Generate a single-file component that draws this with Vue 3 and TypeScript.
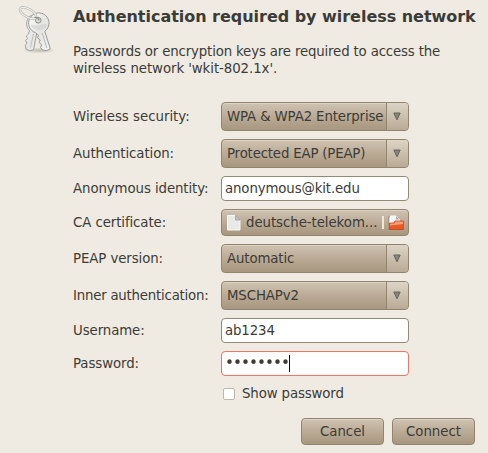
<script setup lang="ts">
import { ref } from 'vue'

interface Field {
  label: string
  kind: 'combo' | 'text' | 'file' | 'password'
  value: string
}

const fields: Field[] = [
  { label: 'Wireless security:', kind: 'combo', value: 'WPA & WPA2 Enterprise' },
  { label: 'Authentication:', kind: 'combo', value: 'Protected EAP (PEAP)' },
  { label: 'Anonymous identity:', kind: 'text', value: 'anonymous@kit.edu' },
  { label: 'CA certificate:', kind: 'file', value: 'deutsche-telekom...' },
  { label: 'PEAP version:', kind: 'combo', value: 'Automatic' },
  { label: 'Inner authentication:', kind: 'combo', value: 'MSCHAPv2' },
  { label: 'Username:', kind: 'text', value: 'ab1234' },
  { label: 'Password:', kind: 'password', value: '••••••••' },
]

const showPassword = ref(false)
</script>

<template>
  <main class="dialog">
    <svg class="keys" viewBox="0 0 40 52" width="40" height="52">
      <defs>
        <linearGradient id="metal" x1="0" y1="0" x2="1" y2="1">
          <stop offset="0" stop-color="#fbfbfa" />
          <stop offset="0.5" stop-color="#e4e4e2" />
          <stop offset="1" stop-color="#f4f4f3" />
        </linearGradient>
        <radialGradient id="ground">
          <stop offset="0" stop-color="#8f8a80" stop-opacity="0.5" />
          <stop offset="1" stop-color="#8f8a80" stop-opacity="0" />
        </radialGradient>
      </defs>
      <ellipse cx="22" cy="47.500" rx="17" ry="3" fill="url(#ground)" />
      <path d="M14 12.500C8.500 16 8.500 24 12.500 27.500L11.500 31 9.300 33 10.500 35.500 8.500 37.500 9.800 40 8.300 42.500 9 46 12.500 47.700 16.500 46.800 20 29 26 14Z" fill="url(#metal)" stroke="#989895" stroke-width=".9" />
      <path d="M16.500 31L13.500 44.500" stroke="#c0c0bd" fill="none" />
      <path d="M18.500 29.700A10.200 10.200 0 1 1 27.800 28.300L33.300 45.800 29.800 47.600 25.500 47 23.500 44.500 24.600 42 22.200 39.500 23.200 37 20.500 34.800 21.500 32.500Z" fill="url(#metal)" stroke="#8f8f8c" stroke-width=".9" />
      <path d="M13.500 21.500C15 28 27 29.500 30.500 22.500C27 18 23 25 13.500 21.500Z" fill="#cfcfcd" opacity=".6" />
      <path d="M25.200 30L29.900 45" stroke="#b8b8b5" fill="none" />
      <circle cx="21.300" cy="17.300" r="2.800" fill="#dedbd3" stroke="#8d8d8a" />
      <ellipse cx="11" cy="10" rx="9" ry="4" transform="rotate(30 11 10)" fill="none" stroke="#b0b0ac" stroke-width="2.400" />
      <ellipse cx="11" cy="10" rx="9" ry="4" transform="rotate(30 11 10)" fill="none" stroke="#efefec" stroke-width="1.300" />
      <path d="M17.500 14.500Q21.500 13.500 22 17.500" fill="none" stroke="#8d8d8a" stroke-width="1.200" />
    </svg>

    <section class="content">
      <h1>Authentication required by wireless network</h1>
      <p>
        <span class="lead">Passwords or encryption keys are required to access the</span><br />
        <span>wireless network 'wkit-802.1x'.</span>
      </p>

      <div class="form">
        <div v-for="field in fields" :key="field.label" class="row" :class="field.kind">
          <span class="label">{{ field.label }}</span>

          <div v-if="field.kind === 'combo'" class="control raised">
            <span class="value">{{ field.value }}</span>
            <span class="arrow">
              <svg width="8" height="9" viewBox="0 0 8 9">
                <path d="M.8 1H7.200L4 7.800Z" fill="#87857d" stroke="#66635a" />
              </svg>
            </span>
          </div>

          <div v-else-if="field.kind === 'file'" class="control raised">
            <svg class="doc" width="14" height="16" viewBox="0 0 14 16">
              <path d="M.5.500H8.500L13 5V15H.5Z" fill="#e9e9e8" stroke="#f7f7f5" />
              <path d="M8.500 .5V5H13Z" fill="#c7c5c0" stroke="#98948b" stroke-width=".7" />
            </svg>
            <span class="value">{{ field.value }}</span>
            <span class="divider"></span>
            <svg class="folder" width="16" height="16" viewBox="0 0 16 16">
              <path d="M.5 2V14H3V2Z" fill="#d9d3ca" stroke="#9d7766" stroke-width=".6" />
              <path d="M2.500 1H8L11.500 4.500V9H2.500Z" fill="#f3f3f1" stroke="#fff" />
              <path d="M8 1V4.500H11.500Z" fill="#aaa69e" />
              <path d="M1.500 8H6L7 6H15.300V14.500H1.500Z" fill="#e95a27" stroke="#c5421a" stroke-width=".8" />
              <path d="M2 8.500H6.500L7.500 6.500H15V9L2 10.500Z" fill="#f6a07a" />
            </svg>
          </div>

          <div v-else class="control entry">
            <span class="value">{{ field.value }}</span>
            <span v-if="field.kind === 'password'" class="caret"></span>
          </div>
        </div>
      </div>

      <label class="check">
        <input v-model="showPassword" type="checkbox" />
        <span>Show password</span>
      </label>
    </section>

    <footer>
      <button type="button" class="raised">Cancel</button>
      <button type="button" class="raised">Connect</button>
    </footer>
  </main>
</template>

<style>
body {
  background: #efebe2;
}
</style>

<style scoped>
.dialog {
  position: relative;
  box-sizing: border-box;
  width: 488px;
  height: 453px;
  padding: 7px 13px 8px 73px;
  background: #efebe2;
  color: #3c3b37;
  font: 13.333px/17px "DejaVu Sans", sans-serif;
  letter-spacing: -0.13px;
  white-space: nowrap;
  display: flex;
  flex-direction: column;
}
.keys {
  position: absolute;
  left: 17px;
  top: 3px;
}
h1 {
  margin: 0 0 17px;
  font-size: 16px;
  line-height: 19px;
  font-weight: bold;
  letter-spacing: -0.03px;
}
p {
  margin: 0 0 25px;
  letter-spacing: -0.07px;
}
.lead {
  letter-spacing: -0.16px;
}
.form {
  display: flex;
  flex-direction: column;
  gap: 8px;
}
.row {
  display: grid;
  grid-template-columns: 148px 188px;
  align-items: center;
  height: 25px;
}
.row.combo {
  height: 29px;
}
.row.file {
  height: 27px;
}
.label {
  letter-spacing: -0.09px;
}
.row:first-child .label {
  letter-spacing: 0;
}
.row:nth-child(6) .label {
  letter-spacing: -0.22px;
}
.control {
  box-sizing: border-box;
  width: 188px;
  height: 100%;
  display: flex;
  align-items: center;
  border-radius: 4px;
}
.raised {
  border: 1px solid #918570;
  border-radius: 4px;
  background: linear-gradient(#cfc3b2, #bbab96 50%, #a7977f);
  box-shadow: inset 0 1px #ddd3c4;
}
.combo .value {
  width: 164px;
  box-sizing: border-box;
  padding-left: 5px;
}
.row:nth-child(2) .value {
  letter-spacing: -0.18px;
}
.arrow {
  flex: 1;
  height: 100%;
  box-sizing: border-box;
  padding-right: 2px;
  display: flex;
  align-items: center;
  justify-content: center;
  border-left: 1px solid #918570;
  border-radius: 0 3px 3px 0;
  background: linear-gradient(#ddd4c6, #b9aa95);
}
.entry {
  border: 1px solid #918a75;
  background: #fff;
  padding-left: 3px;
}
.password .entry {
  border-color: #e37b6c;
  box-shadow: inset 0 0 1px #f3b1a6;
}
.password .value {
  font-size: 15px;
  letter-spacing: -0.85px;
}
.caret {
  width: 1px;
  height: 17px;
  background: #111;
}
.doc {
  margin: 0 5px 0 5px;
}
.file .value {
  width: 136px;
  letter-spacing: -0.06px;
}
.divider {
  width: 2px;
  height: 13px;
  background: #eee7dc;
}
.folder {
  margin-left: 4px;
}
.check {
  display: flex;
  align-items: center;
  height: 17px;
  margin: 9px 0 0 150px;
}
.check input {
  appearance: none;
  box-sizing: border-box;
  width: 12px;
  height: 12px;
  margin: 0 7px 0 0;
  border: 1px solid #bdb8aa;
  border-radius: 2px;
  background: #fff;
}
footer {
  display: flex;
  justify-content: flex-end;
  gap: 8px;
  margin-top: auto;
}
button {
  box-sizing: border-box;
  width: 83px;
  height: 27px;
  padding: 0;
  color: inherit;
  font: inherit;
}
</style>
